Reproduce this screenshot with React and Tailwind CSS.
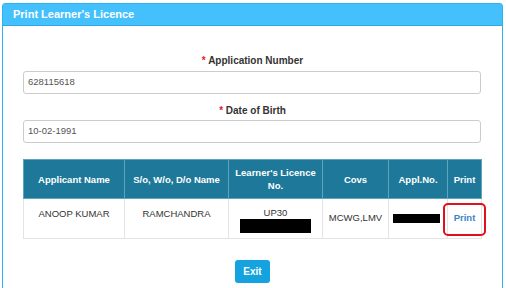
export default function App() {
  const font = { fontFamily: '"Liberation Sans", Arial, sans-serif' };
  return (
    <div className="w-[506px] h-[288px] overflow-hidden bg-white" style={font}>
      <div className="ml-[2px] mt-[3px] w-[501px] h-[300px] border border-[#2fb0ef] rounded-t-[3px]">
        <div className="h-[22px] bg-[#44c1fd] border-b border-[#2fa8e6] flex items-center pl-[10px] text-white font-bold text-[11px]">
          Print Learner's Licence
        </div>
        <div className="px-[20px]">
          <div className="mt-[28px] text-center text-[10px] font-bold text-[#333] leading-[13px]">
            <span className="text-[#e21d1d]">*</span> Application Number
          </div>
          <div className="mt-[4px] h-[23px] w-[458px] border border-[#cccccc] rounded-[3px] flex items-center px-[4px] text-[9.5px] text-[#555]">
            628115618
          </div>
          <div className="mt-[10px] text-center text-[10px] font-bold text-[#333] leading-[13px]">
            <span className="text-[#e21d1d]">*</span> Date of Birth
          </div>
          <div className="mt-[3px] h-[23px] w-[458px] border border-[#cccccc] rounded-[3px] flex items-center px-[4px] text-[9.5px] text-[#555]">
            10-02-1991
          </div>
          <table className="mt-[16px] w-[458px] border-collapse text-[9.5px] table-fixed">
            <colgroup>
              <col className="w-[101px]" />
              <col className="w-[104px]" />
              <col className="w-[94px]" />
              <col className="w-[66px]" />
              <col className="w-[59px]" />
              <col className="w-[34px]" />
            </colgroup>
            <thead>
              <tr className="h-[39px] bg-[#1d7899] text-white font-bold">
                <th className="border border-[#5fa3bd] px-[2px] leading-[13px]">Applicant Name</th>
                <th className="border border-[#5fa3bd] px-[2px] leading-[13px]">S/o, W/o, D/o Name</th>
                <th className="border border-[#5fa3bd] px-[6px] leading-[13px]">Learner's Licence No.</th>
                <th className="border border-[#5fa3bd] px-[2px] leading-[13px]">Covs</th>
                <th className="border border-[#5fa3bd] px-[2px] leading-[13px]">Appl.No.</th>
                <th className="border border-[#5fa3bd] px-[2px] leading-[13px]">Print</th>
              </tr>
            </thead>
            <tbody>
              <tr className="h-[40px] text-[#333]">
                <td className="border border-[#e4e4e4] text-center align-top pt-[8px]">ANOOP KUMAR</td>
                <td className="border border-[#e4e4e4] text-center align-top pt-[8px]">RAMCHANDRA</td>
                <td className="border border-[#e4e4e4] text-center align-top pt-[8px]">
                  <div className="leading-[11px]">UP30</div>
                  <div className="mx-auto mt-[1px] w-[71px] h-[14px] bg-black"></div>
                </td>
                <td className="border border-[#e4e4e4] text-center align-middle">MCWG,LMV</td>
                <td className="border border-[#e4e4e4] align-middle">
                  <div className="ml-[4px] w-[47px] h-[9px] bg-black"></div>
                </td>
                <td className="border border-[#e4e4e4] text-center align-middle relative">
                  <span className="text-[#3a85c6] font-bold">Print</span>
                  <div className="absolute left-[-5px] top-[4px] w-[43px] h-[33px] border-2 border-[#e0101c] rounded-[5px]"></div>
                </td>
              </tr>
            </tbody>
          </table>
          <div className="flex justify-center mt-[21px]">
            <div className="w-[35px] h-[23px] bg-[#14a3df] rounded-[3px] text-white font-bold text-[10px] flex items-center justify-center">
              Exit
            </div>
          </div>
        </div>
      </div>
    </div>
  );
}
